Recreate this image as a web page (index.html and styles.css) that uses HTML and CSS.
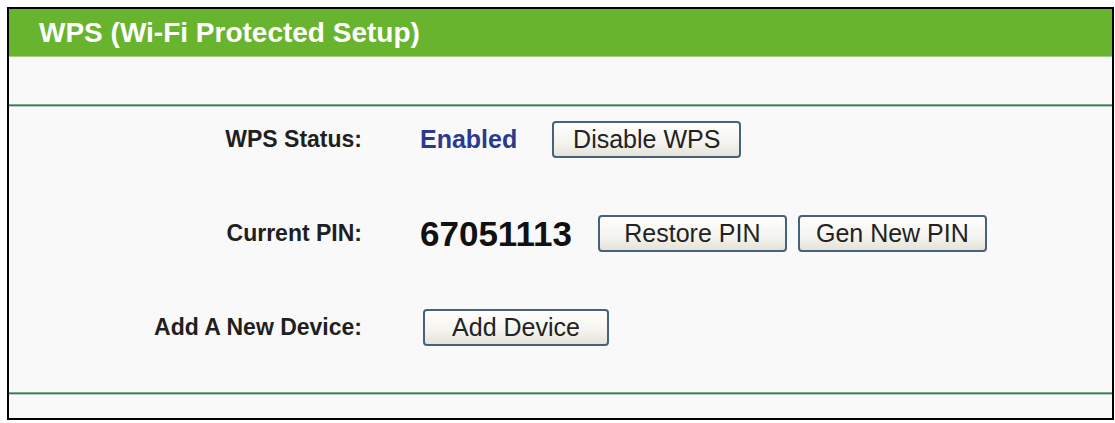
FILE: index.html
```html
<!DOCTYPE html>
<html lang="en">
<head>
    <title>WPS (Wi-Fi Protected Setup)</title>
    <meta http-equiv="Content-Type" content="text/html; charset=utf-8" />
    <link rel="stylesheet" href="styles.css">
</head>
<body>

<div id="wps_box">
    <div class="sectionHeader">WPS (Wi-Fi Protected Setup)</div>
    <div class="sectionSpacer"></div>
    <div class="hline"></div>

    <form class="sectionBody" name="wpsfrm" action="#">
        <div class="row">
            <label>WPS Status:</label>
            <div class="value">
                <span class="status">Enabled</span>
                <input type="button" class="button" value="Disable WPS" />
            </div>
        </div>
        <div class="row">
            <label>Current PIN:</label>
            <div class="value">
                <span class="pin">67051113</span>
                <input type="button" class="button" value="Restore PIN" />
                <input type="button" class="button" value="Gen New PIN" />
            </div>
        </div>
        <div class="row">
            <label>Add A New Device:</label>
            <div class="value">
                <input type="button" class="button" value="Add Device" />
            </div>
        </div>
    </form>

    <div class="hline"></div>
    <div class="sectionFoot"></div>
</div>
<!-- close #wps_box -->

</body>
</html>
```

FILE: styles.css
```css
    /* Neutralize styles and fonts:
    ---------------------------------------------------------------- */
    html, body, form {
        margin: 0;
        padding: 0;
        }
    html {
        font-family: Arial, "Liberation Sans", Helvetica, sans-serif;
        color: #111;
        }
    body {
        background: #fff;
        }

    /* Box:
    ---------------------------------------------------------------- */
    #wps_box {
        margin: 7px 1px 0 7px;
        height: 409px;
        border: 2px solid #000;
        background: #f9f9fa;
        }
    .sectionHeader {
        height: 47px;
        line-height: 47px;
        padding-left: 30px;
        font-size: 28px;
        font-weight: bold;
        color: #fff;
        background: #68b42f;
        border-bottom: 1px solid #a2d07e;
        }
    .sectionSpacer {
        height: 47px;
        }
    .hline {
        height: 1px;
        background: #3b7a52;
        border-top: 1px solid #7faa8e;
        border-bottom: 1px solid #b3d1bd;
        }
    .sectionBody {
        display: flex;
        flex-direction: column;
        gap: 57px;
        padding: 14px 0 46px;
        }
    .sectionFoot {
        height: 20px;
        }

    /* Rows:
    ---------------------------------------------------------------- */
    .row {
        display: flex;
        align-items: center;
        height: 37px;
        }
    label {
        width: 353px;
        text-align: right;
        font-size: 23px;
        font-weight: bold;
        color: #1f1f1f;
        }
    .value {
        display: flex;
        align-items: center;
        gap: 11px;
        margin-left: 58px;
        }
    .status {
        font-size: 25px;
        font-weight: bold;
        color: #2b3a8e;
        margin-right: 24px;
        }
    .pin {
        font-size: 35px;
        font-weight: bold;
        color: #111;
        margin-right: 15px;
        }
    .button {
        width: 189px;
        height: 37px;
        margin: 0;
        padding: 0;
        font-family: Arial, "Liberation Sans", Helvetica, sans-serif;
        font-size: 25px;
        color: #222;
        border: 2px solid #46627f;
        border-radius: 4px;
        background: linear-gradient(#ffffff, #f4f3ee 60%, #e4e2d8);
        }
    .row:last-child .value {
        margin-left: 61px;
        }
    .row:last-child .button {
        width: 186px;
        }
```
